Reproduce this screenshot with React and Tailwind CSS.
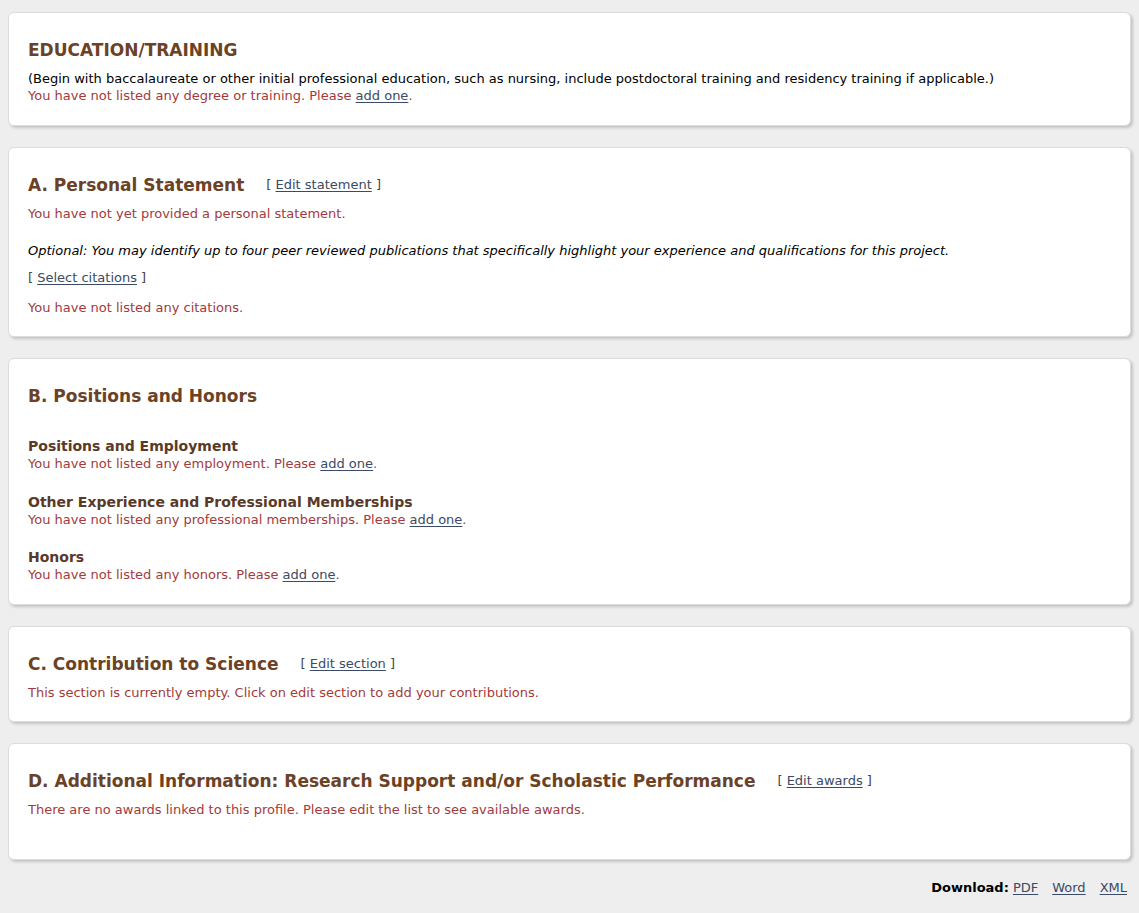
import React from 'react';

const font = { fontFamily: '"DejaVu Sans", Verdana, sans-serif' };

function Card({ children, className = '' }) {
  return (
    <div className={`bg-white border border-[#dcdcdc] rounded-[6px] shadow-[2px_2px_3px_rgba(0,0,0,0.18)] px-[19px] pt-[27px] ${className}`}>
      {children}
    </div>
  );
}

function Heading({ children, action }) {
  return (
    <div className="flex items-center h-5">
      <h2 className="text-[17px] leading-5 font-bold text-[#6b4226]">{children}</h2>
      {action && (
        <span className="ml-[22px] text-[13px] text-[#444]">
          [ <a href="#" className="text-[#3b4a66] underline underline-offset-2">{action}</a> ]
        </span>
      )}
    </div>
  );
}

function Red({ children, className = '' }) {
  return <p className={`text-[13px] leading-[17px] text-[#a33a3a] ${className}`}>{children}</p>;
}

function AddOne() {
  return (
    <a href="#" className="text-[#3b4a66] underline underline-offset-2">add one</a>
  );
}

function SubSection({ title, text, className = '' }) {
  return (
    <div className={className}>
      <h3 className="text-[14px] leading-[18px] font-bold text-[#5a3a26]">{title}</h3>
      <Red>
        {text} <AddOne />.
      </Red>
    </div>
  );
}

export default function App() {
  return (
    <div className="min-h-screen bg-[#eeeeee] px-2 pt-3 pb-4" style={font}>
      <div className="flex flex-col gap-[21px]">
        <Card className="pb-[21px]">
          <Heading>EDUCATION/TRAINING</Heading>
          <p className="mt-[10px] text-[13px] leading-[17px] text-black">
            (Begin with baccalaureate or other initial professional education, such as nursing, include postdoctoral training and residency training if applicable.)
          </p>
          <Red>
            You have not listed any degree or training. Please <AddOne />.
          </Red>
        </Card>

        <Card className="pb-5">
          <Heading action="Edit statement">A. Personal Statement</Heading>
          <Red className="mt-[10px]">You have not yet provided a personal statement.</Red>
          <p className="mt-5 text-[13px] leading-[17px] italic text-black">
            Optional: You may identify up to four peer reviewed publications that specifically highlight your experience and qualifications for this project.
          </p>
          <p className="mt-[10px] text-[13px] leading-[17px] text-[#444]">
            [ <a href="#" className="text-[#3b4a66] underline underline-offset-2">Select citations</a> ]
          </p>
          <Red className="mt-[13px]">You have not listed any citations.</Red>
        </Card>

        <Card className="pb-[21px]">
          <Heading>B. Positions and Honors</Heading>
          <SubSection className="mt-[31px]" title="Positions and Employment" text="You have not listed any employment. Please" />
          <SubSection className="mt-[21px]" title="Other Experience and Professional Memberships" text="You have not listed any professional memberships. Please" />
          <SubSection className="mt-5" title="Honors" text="You have not listed any honors. Please" />
        </Card>

        <Card className="pb-5">
          <Heading action="Edit section">C. Contribution to Science</Heading>
          <Red className="mt-[10px]">This section is currently empty. Click on edit section to add your contributions.</Red>
        </Card>

        <Card className="pb-[41px]">
          <Heading action="Edit awards">D. Additional Information: Research Support and/or Scholastic Performance</Heading>
          <Red className="mt-[10px]">There are no awards linked to this profile. Please edit the list to see available awards.</Red>
        </Card>
      </div>

      <div className="mt-[19px] flex justify-end items-center gap-[14px] pr-1 text-[13px] leading-[17px]">
        <span className="font-bold text-black -mr-[10px]">Download:</span>
        <a href="#" className="text-[#3b4a66] underline underline-offset-2">PDF</a>
        <a href="#" className="text-[#3b4a66] underline underline-offset-2">Word</a>
        <a href="#" className="text-[#3b4a66] underline underline-offset-2">XML</a>
      </div>
    </div>
  );
}
